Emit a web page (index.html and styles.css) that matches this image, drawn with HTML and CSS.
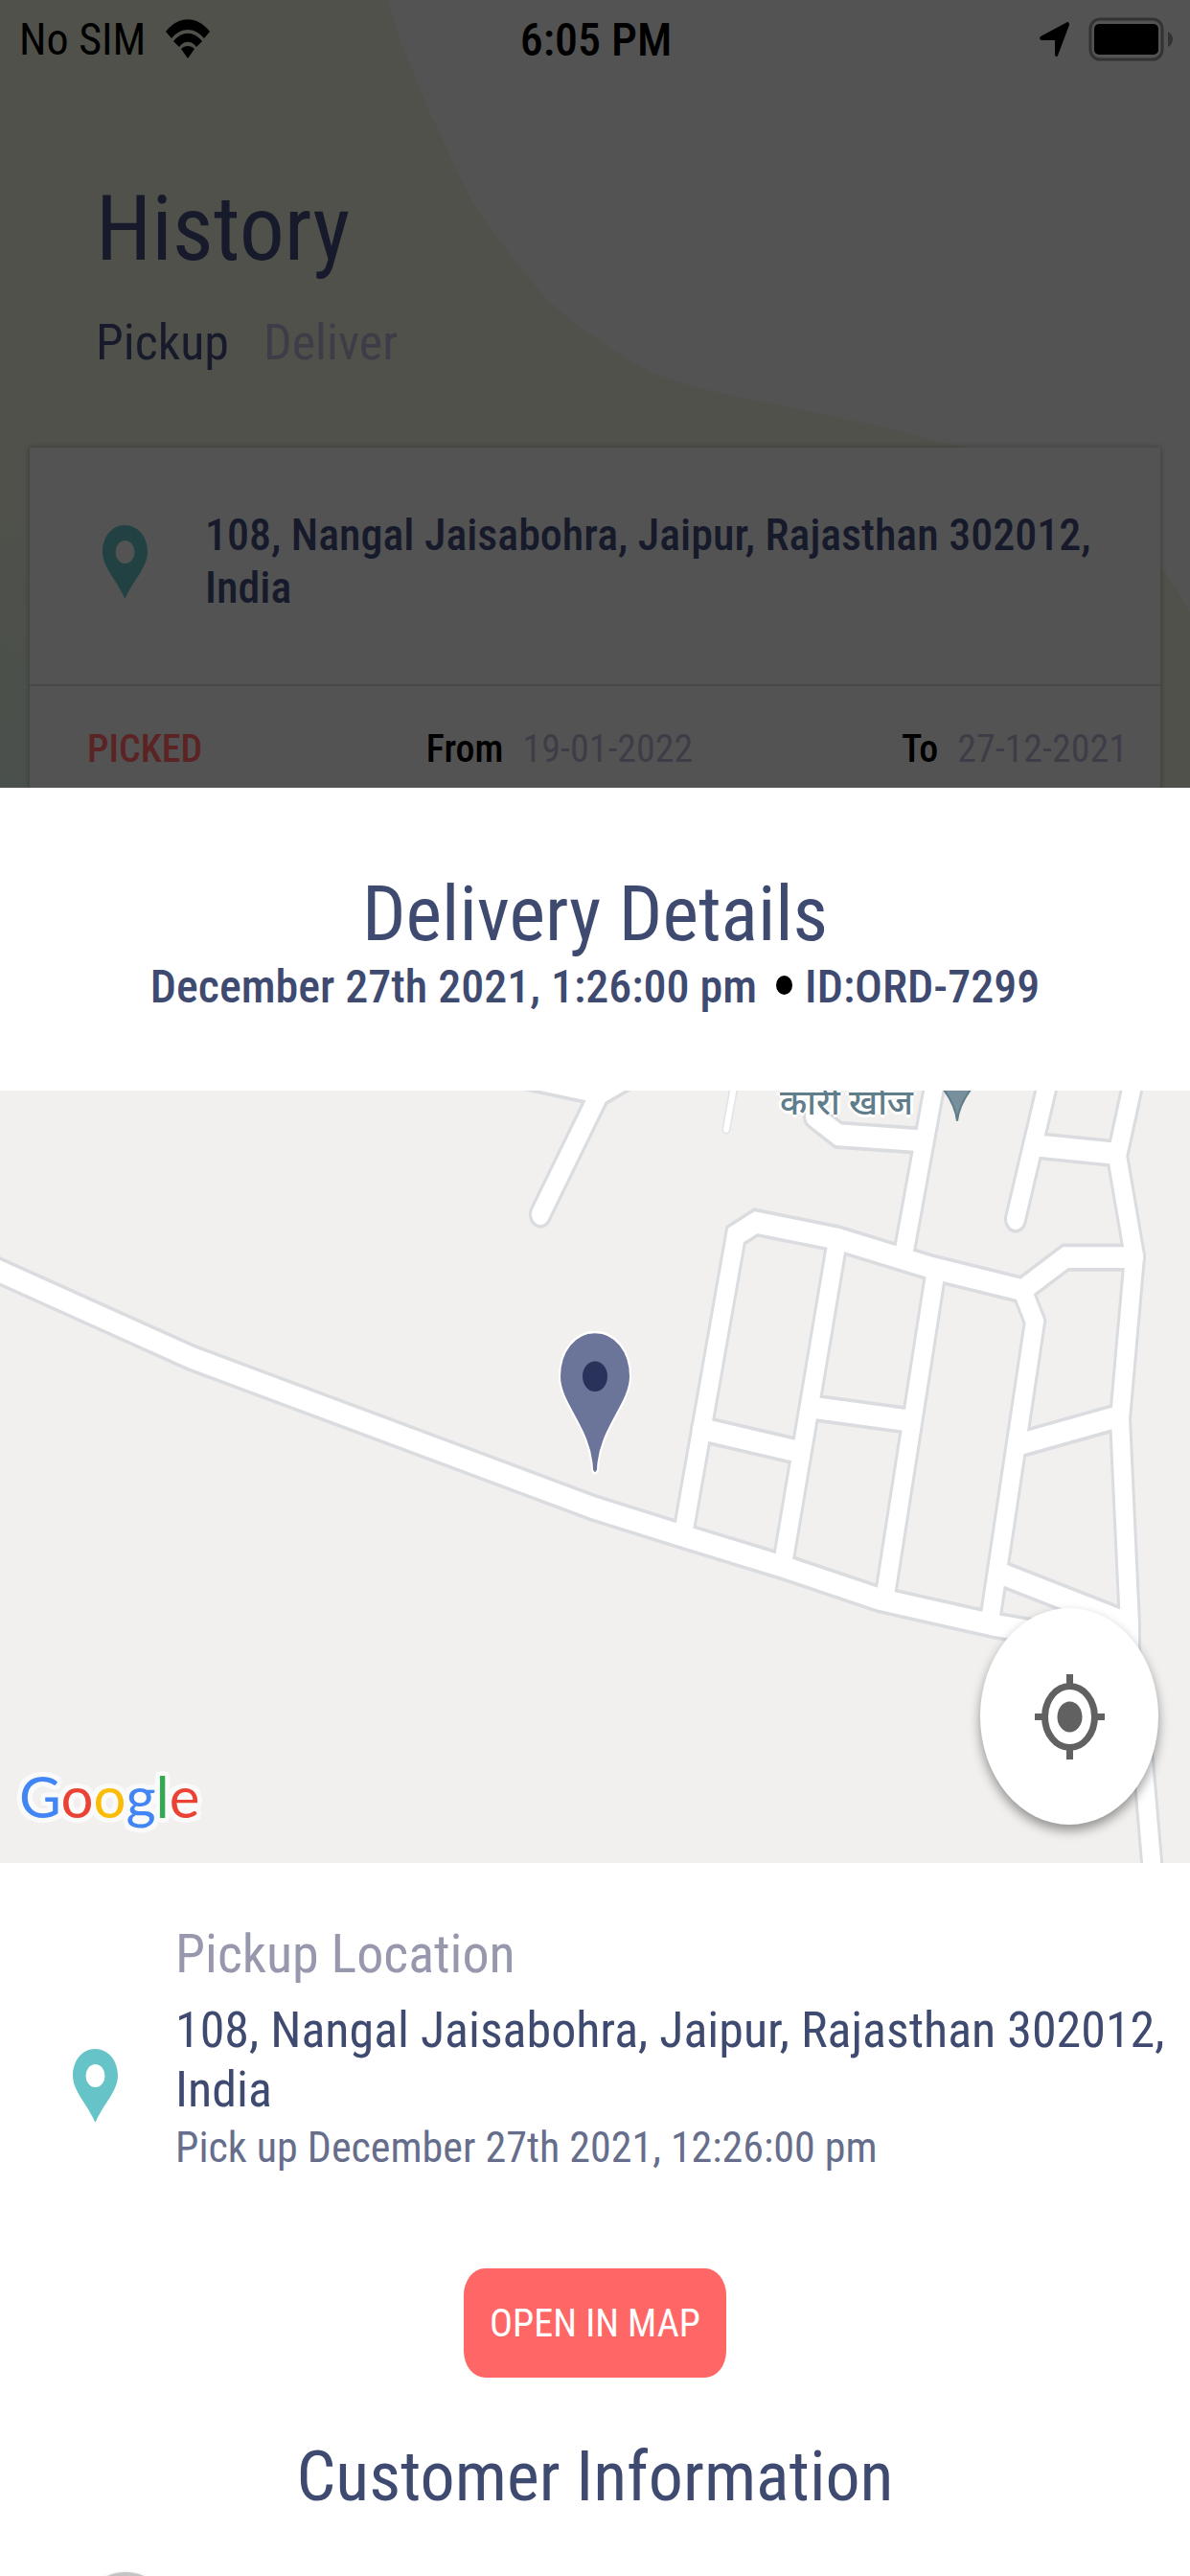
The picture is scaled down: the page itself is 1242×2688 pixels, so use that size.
FILE: index.html
```html
<!DOCTYPE html>
<html lang="en">
<head>
    <meta charset="UTF-8">
    <meta name="viewport" content="width=device-width, initial-scale=1.0">
    <title>Delivery Details</title>
    <link rel="stylesheet" href="styles.css">
</head>
<body>
    <header class="history">
        <svg class="history-bg" viewBox="0 0 1242 822" preserveAspectRatio="none" aria-hidden="true">
            <defs>
                <linearGradient id="blob" x1="0" y1="1" x2="0.2" y2="0.7">
                    <stop offset="0" stop-color="#4a504c"/>
                    <stop offset="1" stop-color="#50514a"/>
                </linearGradient>
            </defs>
            <path fill="url(#blob)" d="M0 0H405C412 26 420 50 432 77C448 118 460 140 475 173C498 226 518 244 546 283C570 314 592 332 618 350C645 369 670 386 697 395C730 406 765 413 800 420C840 428 875 436 911 443L998 465C1090 490 1180 545 1216 598Q1230 615 1242 640V822H0Z"/>
        </svg>

        <div class="status">
            <div class="status-left">
                <span>No SIM</span>
                <svg width="48" height="42" viewBox="0 0 48 42" preserveAspectRatio="none" aria-hidden="true">
                    <path d="M1 13C14-4 34-4 47 13L41 20C31 8 17 8 7 20Z"/>
                    <path d="M9 23C18 12 30 12 39 23L33 29C28 22 20 22 15 29Z"/>
                    <path d="M17 31C21 27 27 27 31 31L24 41Z"/>
                </svg>
            </div>
            <span class="time">6:05 PM</span>
            <div class="status-right">
                <svg width="31" height="37" viewBox="0 0 31 37" aria-hidden="true">
                    <path d="M29 0Q31 0 31 3L19 35Q17 38 16 34V19H2Q-1 18 1 15Z"/>
                </svg>
                <svg width="88" height="46" viewBox="0 0 88 46" aria-hidden="true">
                    <rect x="2" y="2" width="75" height="42" rx="10" fill="none" stroke="#333" stroke-width="3"/>
                    <rect x="6" y="7" width="67" height="32" rx="5"/>
                    <path d="M83 15Q88 18 88 23T83 31Z" fill="#333"/>
                </svg>
            </div>
        </div>

        <h1>History</h1>
        <nav class="tabs">
            <a href="#pickup" class="active">Pickup</a>
            <a href="#deliver">Deliver</a>
        </nav>

        <div class="card">
            <div class="card-main">
                <svg class="pin" viewBox="0 0 47 76" aria-hidden="true">
                    <path fill-rule="evenodd" d="M23 0C37 0 47 12 47 28C47 44 31 59 24 76H23C16 59 0 44 0 28C0 12 10 0 23 0ZM23.500 16A10 12 0 1 0 23.500 40A10 12 0 1 0 23.500 16Z"/>
                </svg>
                <p>108, Nangal Jaisabohra, Jaipur, Rajasthan 302012, India</p>
            </div>
            <div class="card-foot">
                <span class="state">PICKED</span>
                <span><b>From</b>19-01-2022</span>
                <span><b>To</b>27-12-2021</span>
            </div>
        </div>
    </header>

    <main class="sheet">
        <div class="sheet-head">
            <h2>Delivery Details</h2>
            <p><span>December 27th 2021, 1:26:00 pm</span><i class="dot"></i><span>ID:ORD-7299</span></p>
        </div>

        <div class="map">
            <svg class="map-art" viewBox="0 0 1242 662" preserveAspectRatio="none" aria-hidden="true">
                <defs>
                    <g id="roads">
                        <path d="M-20 147L0 155L200 229L621 358L714 382L817 408L918 436L1037 458L1178 478"/>
                        <path d="M713 380L768 124L789 113L874 127L973 152L1067 171L1112 143H1184"/>
                        <path d="M817 406L874 128M924 432L977 153M1033 455L1080 198L1069 175"/>
                        <path d="M732 290L831 309M851 272L950 283M1065 303L1169 279M1045 414L1178 457"/>
                        <path d="M1184 -12L1166 56L1184 142L1169 281L1179 458V480L1193 574L1204 680"/>
                        <path d="M1095 -12L1060 110M1080 47L1164 54"/>
                        <path d="M977 -12L943 141M962 43L875 38L850 22"/>
                        <path d="M530 -15L627 2L664 -16M627 0L564 106"/>
                    </g>
                </defs>
                <path class="lane-edge" d="M768 -12L758 33"/>
                <path class="lane" d="M768 -12L758 33"/>
                <use href="#roads" class="road-edge"/>
                <use href="#roads" class="road"/>
                <path fill="#78909c" stroke="#607d8b" stroke-width="2" d="M984 -2H1014Q1001 12 999 26Q997 12 984 -2Z"/>
                <path fill="#6b7499" stroke="#fff" stroke-width="2" d="M621 207C642 207 658 223 658 245C658 269 625 290 624 325Q621 331 618 325C617 290 584 269 584 245C584 223 600 207 621 207Z"/>
                <circle cx="621" cy="245" r="13" fill="#28325a"/>
            </svg>
            <span class="place" lang="hi">कारी खोज</span>
            <span class="google"><span class="blue">G</span><span class="red">o</span><span class="yellow">o</span><span class="blue">g</span><span class="green">l</span><span class="red">e</span></span>
            <button class="locate" aria-label="My location">
                <svg viewBox="0 0 73 89" aria-hidden="true">
                    <ellipse cx="36.500" cy="44.500" rx="26" ry="32" fill="none" stroke="#616161" stroke-width="7"/>
                    <ellipse cx="36.500" cy="44.500" rx="13" ry="16" fill="#616161"/>
                    <path d="M36.500 0V10M36.500 79V89M0 44.500H9M64 44.500H73" stroke="#616161" stroke-width="7"/>
                </svg>
            </button>
        </div>

        <section class="location">
            <svg class="pin" viewBox="0 0 47 76" aria-hidden="true">
                <path fill-rule="evenodd" d="M23 0C37 0 47 12 47 28C47 44 31 59 24 76H23C16 59 0 44 0 28C0 12 10 0 23 0ZM23.500 16A10 12 0 1 0 23.500 40A10 12 0 1 0 23.500 16Z"/>
            </svg>
            <div>
                <h3>Pickup Location</h3>
                <p class="address">108, Nangal Jaisabohra, Jaipur, Rajasthan 302012, India</p>
                <p class="when">Pick up December 27th 2021, 12:26:00 pm</p>
            </div>
        </section>

        <button class="open">OPEN IN MAP</button>

        <section class="customer">
            <h2>Customer Information</h2>
            <div class="avatar"></div>
        </section>
    </main>
</body>
</html>
```
FILE: styles.css
```css
*{
    box-sizing: border-box;
    margin: 0;
    padding: 0;
}
body{
    height: 100vh;
    overflow: hidden;
    background-color: white;
    color: #3f4a70;
    font-family: "Roboto Condensed", Roboto, sans-serif;
}
button{
    border: none;
    font-family: inherit;
}
h1, h2, h3{
    font-weight: 400;
}

/* history screen behind the sheet */
.history{
    position: relative;
    background-color: #535353;
    color: #161a2b;
}
.history-bg{
    position: absolute;
    width: 100%;
    height: 100%;
}
.status{
    position: relative;
    display: grid;
    grid-template-columns: 1fr auto 1fr;
    align-items: center;
    height: 82px;
    padding: 0 18px 0 20px;
    color: black;
    font-size: 46px;
}
.status-left, .status-right{
    display: flex;
    align-items: center;
    gap: 20px;
}
.status-right{
    justify-content: flex-end;
}
.time{
    font-size: 48px;
    font-weight: 500;
}
.history h1{
    position: relative;
    margin: 100px 100px 32px;
    font-size: 94px;
    line-height: 114px;
}
.tabs{
    position: relative;
    display: flex;
    gap: 36px;
    margin: 0 100px;
    font-size: 52px;
    line-height: 60px;
}
.tabs a{
    color: #3e3d47;
    text-decoration: none;
}
.tabs .active{
    color: #161a2b;
}
.card{
    position: relative;
    margin: 79px 31px 0;
    background-color: #535353;
    box-shadow: 0 0 6px rgba(0, 0, 0, 0.3);
}
.card-main{
    display: flex;
    align-items: center;
    gap: 60px;
    padding: 64px 40px 73px 76px;
    border-bottom: 2px solid #474747;
    font-size: 46px;
    font-weight: 500;
    line-height: 55px;
}
.pin{
    flex: none;
    width: 47px;
    height: 76px;
    fill: #66c4c9;
}
.card .pin{
    fill: #224143;
}
.card-foot{
    display: flex;
    justify-content: space-between;
    padding: 40px 34px 14px 60px;
    color: #3e3d47;
    font-size: 40px;
    line-height: 52px;
}
.card-foot b{
    margin-right: 20px;
    color: black;
    font-weight: 500;
}
.card-foot .state{
    margin-right: 16px;
    color: #5c2324;
    font-weight: 500;
}

/* delivery sheet */
.sheet{
    position: relative;
    display: flex;
    flex-direction: column;
    background-color: white;
}
.sheet-head{
    padding: 92px 20px 78px;
    text-align: center;
}
.sheet-head h2{
    margin-bottom: 6px;
    font-size: 80px;
    line-height: 80px;
}
.sheet-head p{
    display: flex;
    align-items: center;
    justify-content: center;
    font-size: 48px;
    font-weight: 500;
    line-height: 60px;
}
.dot{
    width: 17px;
    height: 20px;
    margin: 0 13px 4px 20px;
    border-radius: 50%;
    background-color: black;
}

.map{
    position: relative;
    height: 806px;
    background-color: #f1f0ee;
    overflow: hidden;
}
.map-art{
    display: block;
    width: 100%;
    height: 100%;
}
.road, .road-edge, .lane, .lane-edge{
    fill: none;
    stroke-linecap: round;
}
.road-edge{
    stroke: #dadce0;
    stroke-width: 24px;
}
.road{
    stroke: white;
    stroke-width: 18px;
}
.lane-edge{
    stroke: #e2e3e6;
    stroke-width: 9px;
}
.lane{
    stroke: white;
    stroke-width: 6px;
}
.place{
    position: absolute;
    top: -12px;
    left: 814px;
    color: #607d8b;
    font-family: "Noto Sans", sans-serif;
    font-size: 36px;
    font-weight: 500;
    line-height: 48px;
    text-shadow: 3px 0 white, -3px 0 white, 0 3px white, 0 -3px white;
}
.google{
    position: absolute;
    bottom: 30px;
    left: 20px;
    font-family: Lato, sans-serif;
    font-size: 60px;
    line-height: 80px;
    text-shadow: 5px 0 #fafafa, -5px 0 #fafafa, 0 5px #fafafa, 0 -5px #fafafa, 4px 4px #fafafa, -4px -4px #fafafa, 4px -4px #fafafa, -4px 4px #fafafa;
}
.blue{ color: #4285f4; }
.red{ color: #ea4335; }
.yellow{ color: #fbbc05; }
.green{ color: #34a853; }
.locate{
    position: absolute;
    right: 33px;
    bottom: 40px;
    display: flex;
    align-items: center;
    justify-content: center;
    width: 186px;
    height: 226px;
    border-radius: 50%;
    background-color: white;
    box-shadow: 0 6px 12px rgba(0, 0, 0, 0.4);
}
.locate svg{
    width: 73px;
    height: 89px;
}

.location{
    display: flex;
    align-items: center;
    gap: 60px;
    padding: 65px 20px 0 76px;
}
.location .pin{
    margin-top: 78px;
}
.location h3{
    margin-bottom: 19px;
    color: #9797ad;
    font-size: 56px;
    line-height: 60px;
}
.address{
    font-size: 52px;
    line-height: 62px;
}
.when{
    margin-top: 5px;
    color: #666e8c;
    font-size: 44px;
    line-height: 48px;
}
.open{
    align-self: center;
    height: 114px;
    margin: 102px 0 64px;
    padding: 0 27px;
    border-radius: 22px / 28px;
    background-color: #ff6666;
    color: white;
    font-size: 40px;
}
.customer h2{
    margin-bottom: 59px;
    font-size: 72px;
    line-height: 80px;
    text-align: center;
}
.avatar{
    width: 96px;
    height: 96px;
    margin-left: 83px;
    border-radius: 50%;
    background-color: #c4c4c4;
    box-shadow: 0 0 3px #ddd;
}
```
